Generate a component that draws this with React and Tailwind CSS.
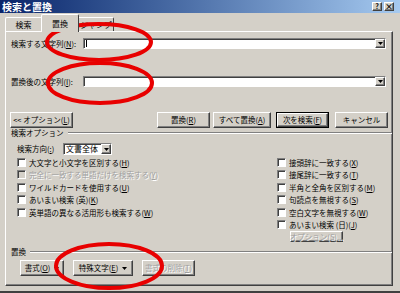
import React from 'react';

const raised =
  'border border-t-white border-l-white border-r-[#404040] border-b-[#404040] shadow-[inset_-1px_-1px_0_#808080]';
const sunken =
  'border border-t-[#808080] border-l-[#808080] border-r-white border-b-white shadow-[inset_1px_1px_0_#404040]';
const dim = 'text-[#a0a0a0] [text-shadow:1px_1px_0_#fff]';

const Arrow = () => (
  <svg width="5" height="3" viewBox="0 0 5 3">
    <path d="M0 0h5L2.5 3z" fill="#000" />
  </svg>
);

const DropBtn = () => (
  <div className={`flex items-center justify-center w-[10px] h-full bg-[#d4d0c8] ${raised}`}>
    <Arrow />
  </div>
);

const Button = ({ className = '', disabled, arrow, children }) => (
  <div
    className={`flex items-center justify-center gap-[4px] h-full bg-[#d4d0c8] ${raised} ${
      disabled ? dim : 'text-black'
    } ${className}`}
  >
    <span className="whitespace-nowrap">{children}</span>
    {arrow && <Arrow />}
  </div>
);

const Key = ({ k }) => (
  <>
    (<u>{k}</u>)
  </>
);

const Check = ({ label, disabled }) => (
  <div className="flex items-center h-[12.5px]">
    <div className={`w-[9px] h-[9px] ${sunken} ${disabled ? 'bg-[#d4d0c8]' : 'bg-white'}`} />
    <span className={`ml-[3px] whitespace-nowrap ${disabled ? dim : ''}`}>{label}</span>
  </div>
);

const GroupLabel = ({ children, className = '' }) => (
  <div className={`flex items-center pl-[5px] ${className}`}>
    <span className="whitespace-nowrap">{children}</span>
    <div className="flex-1 ml-[4px] border-t border-t-[#808080] border-b border-b-white" />
  </div>
);

const TextRow = ({ label, caret, className = '' }) => (
  <div className={`flex items-center h-[11px] ${className}`}>
    <div className="w-[77px] pl-[5px] whitespace-nowrap">{label}</div>
    <div className={`flex-1 mr-[6px] h-full flex items-center justify-between bg-white ${sunken}`}>
      <div className="pl-[2px] flex items-center">
        {caret && <div className="w-px h-[7px] bg-black" />}
      </div>
      <DropBtn />
    </div>
  </div>
);

export default function App() {
  return (
    <div className="relative w-[400px] h-[293px] overflow-hidden bg-[#d4d0c8] font-['Noto_Sans_CJK_JP','Liberation_Sans',sans-serif] text-[7.5px] leading-none text-black flex flex-col">
      {/* title bar */}
      <div className="h-[13px] flex items-center justify-between pl-[2px] pr-[6px] bg-gradient-to-r from-[#0a246a] to-[#a6caf0]">
        <span className="text-white font-bold text-[10px]">検索と置換</span>
        <div className="flex gap-[2px]">
          <div className={`w-[10px] h-[9px] bg-[#d4d0c8] ${raised} flex items-center justify-center text-[7px] font-bold`}>?</div>
          <div className={`w-[10px] h-[9px] bg-[#d4d0c8] ${raised} flex items-center justify-center text-[8px] font-bold`}>×</div>
        </div>
      </div>

      {/* tabs */}
      <div className="h-[18px] flex items-end pl-[5px]">
        <div className="w-[36px] h-[14px] flex items-center justify-center border-t border-l border-t-white border-l-white rounded-tl-[2px] text-[8px]">
          検索
        </div>
        <div className="relative z-10 -mb-px w-[38px] h-[18px] flex items-center justify-center bg-[#d4d0c8] border-t border-l border-r border-t-white border-l-white border-r-[#404040] rounded-t-[2px] text-[8px]">
          置換
        </div>
        <div className="w-[35px] h-[14px] flex items-center justify-center border-t border-r border-t-white border-r-[#404040] rounded-tr-[2px] text-[8px]">
          ジャンプ
        </div>
      </div>

      {/* panel */}
      <div className={`ml-[5px] w-[388px] h-[255px] flex flex-col ${raised}`}>
        <TextRow className="mt-[6px]" caret label={<>検索する文字列<Key k="N" />:</>} />
        <TextRow className="mt-[27px]" label={<>置換後の文字列<Key k="I" />:</>} />

        <div className="mt-[25px] h-[16px] flex pl-[4px] pr-[4px]">
          <Button className="w-[63px]">&lt;&lt; オプション<Key k="L" /></Button>
          <div className="ml-auto flex h-full">
            <Button className="w-[53px]">置換<Key k="R" /></Button>
            <Button className="w-[58px] ml-[3px]">すべて置換<Key k="A" /></Button>
            <div className="ml-[5px] w-[53px] h-full border border-black">
              <Button className="w-full">次を検索<Key k="F" /></Button>
            </div>
            <Button className="w-[53px] ml-[6px]">キャンセル</Button>
          </div>
        </div>

        <GroupLabel className="h-[9px]">検索オプション</GroupLabel>

        <div className="mt-[6px] h-[12px] flex items-center pl-[11px]">
          <div className="w-[46px] whitespace-nowrap">検索方向(<u>:</u>)</div>
          <div className={`w-[49px] h-full flex items-center justify-between bg-white ${sunken}`}>
            <span className="pl-[2px] text-[8px]">文書全体</span>
            <DropBtn />
          </div>
        </div>

        <div className="mt-[1px] flex">
          <div className="w-[271px] pl-[11px] flex flex-col">
            <Check label={<>大文字と小文字を区別する<Key k="H" /></>} />
            <Check disabled label={<>完全に一致する単語だけを検索する<Key k="Y" /></>} />
            <Check label={<>ワイルドカードを使用する<Key k="U" /></>} />
            <Check label={<>あいまい検索 (英)<Key k="K" /></>} />
            <Check label={<>英単語の異なる活用形も検索する<Key k="W" /></>} />
          </div>
          <div className="flex flex-col">
            <Check label={<>接頭辞に一致する<Key k="X" /></>} />
            <Check label={<>接尾辞に一致する<Key k="T" /></>} />
            <Check label={<>半角と全角を区別する<Key k="M" /></>} />
            <Check label={<>句読点を無視する<Key k="S" /></>} />
            <Check label={<>空白文字を無視する<Key k="W" /></>} />
            <Check label={<>あいまい検索 (日)<Key k="J" /></>} />
            <div className="h-[11px] ml-[13px] w-[53px]">
              <Button disabled className="w-full">オプション(S)...</Button>
            </div>
          </div>
        </div>

        <GroupLabel className="h-[10px] mt-[5px]">置換</GroupLabel>

        <div className="mt-[3px] h-[16px] flex pl-[14px] gap-[9px]">
          <Button arrow className="w-[44px]">書式<Key k="O" /></Button>
          <Button arrow className="w-[60px]">特殊文字<Key k="E" /></Button>
          <Button disabled className="w-[53px]">書式の削除<Key k="T" /></Button>
        </div>
      </div>
      <div className="mt-auto h-[2px] bg-[#404040]" />

      {/* red annotation ellipses */}
      <svg className="absolute left-0 top-0 pointer-events-none" width="400" height="293" viewBox="0 0 400 293">
        <g fill="none" stroke="#e80000" strokeWidth="4">
          <ellipse cx="99" cy="42" rx="52" ry="18" />
          <ellipse cx="100" cy="83" rx="52" ry="20" />
          <ellipse cx="109" cy="266" rx="53" ry="22" />
        </g>
      </svg>
    </div>
  );
}
